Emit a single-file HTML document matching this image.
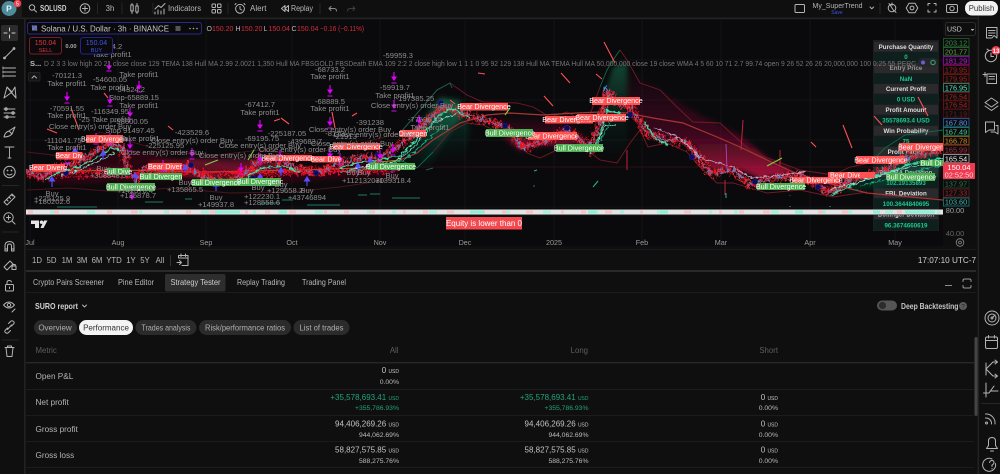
<!DOCTYPE html>
<html lang="en"><head><meta charset="utf-8"><title>SOLUSD</title>
<style>
html,body{margin:0;padding:0;width:1000px;height:474px;overflow:hidden;background:#0f0f0f}
svg{display:block;font-family:"Liberation Sans",sans-serif}
.i{fill:none;stroke:#b4b4b4;stroke-width:1;stroke-linecap:round;stroke-linejoin:round}
.g text{fill:#8c8c8c;font-size:7.6px;text-anchor:middle}
.bear rect{fill:#ff5252}.bull rect{fill:#4caf50}
.l text{fill:#fff;font-size:7.2px;text-anchor:middle}
.h{fill:#2a2a2c}.v{fill:#0e1f1d}
.ht{fill:#ddd;font-size:6.2px;font-weight:bold;text-anchor:middle}
.vt{fill:#1fc58f;font-size:6.2px;font-weight:bold;text-anchor:middle}
.pl{fill:#0c0c0c;stroke-width:.8}
.pt{font-size:7.3px;text-anchor:middle}
.tab{fill:#b8b8b8;font-size:8.2px}
.pill{fill:#2b2b2b}
.pt2{fill:#b0b0b0;font-size:8px;text-anchor:middle}
.met{fill:#b4b4b4;font-size:8.2px}
.val{fill:#c4c4c4;font-size:8px;text-anchor:end}
.pct{fill:#bcbcbc;font-size:6.8px;text-anchor:end}
.grn{fill:#22a27c}
.ax{fill:#9a9a9a;font-size:7.2px;text-anchor:middle}
.rng{fill:#b8b8b8;font-size:7.8px;text-anchor:middle}
</style></head><body>
<svg width="1000" height="474" viewBox="0 0 1000 474" xmlns="http://www.w3.org/2000/svg">
<defs>
<path id="p" fill="none" d="M27 172L43 177 57 167 77 162 93 153 110 143 123 148 128 173 137 180 147 167 167 170 187 167 203 177 227 182 243 175 260 160 280 160 300 170 320 172 340 163 360 158 380 157 400 145 420 128 443 107 467 115 490 122 507 128 523 147 543 142 567 130 590 148 600 123 607 90 617 103 630 107 647 133 667 140 687 142 710 173 733 170 750 185 773 178 800 175 830 193 850 180 870 175 885 170 900 160 920 155 943 150"/>
<linearGradient id="rf" x1="0" y1="0" x2="0" y2="1"><stop offset="0" stop-color="#a01040" stop-opacity=".02"/><stop offset=".6" stop-color="#b01044" stop-opacity=".3"/><stop offset="1" stop-color="#f01050" stop-opacity=".7"/></linearGradient>
<linearGradient id="gf" x1="0" y1="0" x2="0" y2="1"><stop offset="0" stop-color="#18a070" stop-opacity=".4"/><stop offset="1" stop-color="#0a4030" stop-opacity="0"/></linearGradient>
<linearGradient id="gf2" x1="0" y1="1" x2="1" y2="0"><stop offset="0" stop-color="#107050" stop-opacity="0"/><stop offset="1" stop-color="#14a070" stop-opacity=".45"/></linearGradient>
<clipPath id="c"><rect x="26" y="20" width="917" height="189"/></clipPath>
<filter id="j" x="-2%" y="-25%" width="104%" height="150%"><feTurbulence type="fractalNoise" baseFrequency=".38 .22" numOctaves="2" seed="3" result="n"/><feDisplacementMap in="SourceGraphic" in2="n" scale="11" xChannelSelector="R" yChannelSelector="G"/></filter>
<filter id="j2" x="-2%" y="-25%" width="104%" height="150%"><feTurbulence type="fractalNoise" baseFrequency=".22 .3" numOctaves="2" seed="8" result="n"/><feDisplacementMap in="SourceGraphic" in2="n" scale="5" xChannelSelector="R" yChannelSelector="G"/></filter>
<filter id="b" x="-20%" y="-20%" width="140%" height="140%"><feGaussianBlur stdDeviation="2.500"/></filter>
</defs>

<!-- page background + chart -->
<rect width="1000" height="474" fill="#0f0f0f"/>
<rect x="26" y="20" width="917" height="226" fill="#0a0a0c"/>
<rect x="26" y="246" width="950" height="24" fill="#0f0f0f"/>
<rect x="943" y="20" width="33" height="226" fill="#0e0e0e"/>
<rect x="0" y="17.500" width="978" height="1.600" fill="#222"/>
<rect x="24" y="18" width="1.600" height="456" fill="#222"/>
<rect x="26" y="270" width="950" height="2" fill="#2a2a2a"/>
<rect x="26" y="249" width="950" height="1" fill="#1a1a1a"/>
<rect x="977.500" y="0" width="1.600" height="474" fill="#222"/>

<!-- grid -->
<g stroke="#17171a" stroke-width=".8">
<path d="M30 20V246M118 20V246M206 20V246M292 20V246M380 20V246M465 20V246M554 20V246M642 20V246M721 20V246M810 20V246M895 20V246"/>
<path d="M26 60H943M26 100H943M26 140H943M26 207H943"/>
</g>
<path d="M400 167H943" stroke="#3a1118" stroke-width=".8"/>

<!-- on-chart table -->
<g>
<rect x="873" y="40" width="66" height="191" fill="#1a1e1e"/>
<rect class="h" x="874" y="42" width="64" height="9.500"/><rect class="v" x="874" y="52" width="64" height="11"/>
<rect class="h" x="874" y="63" width="64" height="10"/><rect class="v" x="874" y="74" width="64" height="9.500"/>
<rect class="h" x="874" y="84" width="64" height="9.500"/><rect class="v" x="874" y="94.500" width="64" height="9.500"/>
<rect class="h" x="874" y="105" width="64" height="9.500"/><rect class="v" x="874" y="115" width="64" height="10"/>
<rect class="h" x="874" y="126" width="64" height="9.500"/><rect class="v" x="874" y="136.500" width="64" height="9.500"/>
<rect class="h" x="874" y="147" width="64" height="9.500"/><rect class="v" x="874" y="157" width="64" height="9.500"/>
<rect class="h" x="874" y="167" width="64" height="10"/><rect class="v" x="874" y="178" width="64" height="9.500"/>
<rect class="h" x="874" y="188.500" width="64" height="9.500"/><rect class="v" x="874" y="199" width="64" height="9.500"/>
<rect class="h" x="874" y="209.500" width="64" height="9.500"/><rect class="v" x="874" y="220" width="64" height="10"/>
<text class="ht" x="906" y="49">Purchase Quantity</text><text class="vt" x="906" y="59">0</text>
<text class="ht" x="906" y="70" fill-opacity=".6">Entry Price</text><text class="vt" x="906" y="81">NaN</text>
<text class="ht" x="906" y="91">Current Profit</text><text class="vt" x="906" y="101.500">0 USD</text>
<text class="ht" x="906" y="112">Profit Amount</text><text class="vt" x="906" y="122.500">35578693.4 USD</text>
<text class="ht" x="906" y="133">Win Probability</text><text class="vt" x="906" y="143.500">75</text>
<text class="ht" x="906" y="154">Profit Factor</text><text class="vt" x="906" y="164">1.6</text>
<text class="ht" x="906" y="174.500">PNL MA Deviation</text><text class="vt" x="906" y="185">102.19135893</text>
<text class="ht" x="906" y="195.500">FBL Deviation</text><text class="vt" x="906" y="206">100.3644840695</text>
<text class="ht" x="906" y="216.500">Bollinger Deviation</text><text class="vt" x="906" y="227.500">96.3674660619</text>
</g>

<g clip-path="url(#c)">
<!-- shaded zones -->
<g filter="url(#b)">
<path d="M400 165L415 130 440 97 460 100 470 130 465 165 420 165Z" fill="url(#gf)"/>
<path d="M400 165L420 125 443 100 467 108 452 130 430 165Z" fill="url(#gf2)"/>
<path d="M483 116L520 115 560 118 588 140 565 146 540 145 520 150 500 135Z" fill="url(#rf)"/>
<path d="M600 160V110L613 67 627 63V160Z" fill="url(#gf)"/>
<path d="M627 70L660 90 700 115 740 135 770 160 795 172 760 178 735 168 712 170 690 142 665 138 645 132 630 108Z" fill="url(#rf)"/>
<path d="M800 170L840 172 870 170 850 182 832 192 815 182Z" fill="url(#rf)" opacity=".7"/>
<path d="M850 182L880 170 905 152 940 145 940 175 880 188 845 193Z" fill="#0e6a50" opacity=".25"/>
<path d="M27 178L90 158 125 147 200 165 270 165 340 165 390 155 400 175 330 180 240 186 180 180 120 183 60 185Z" fill="#500814" opacity=".45"/>
<path d="M40 170H130M185 160L235 168 290 170" stroke="#a01050" stroke-width="5" opacity=".35" fill="none"/>
<path d="M148 160L250 158 290 165 240 180 160 176Z" fill="#a0103a" opacity=".45"/>
</g>

<!-- bands -->
<g fill="none" stroke-width=".9">
<path stroke="#731a24" d="M400 133L420 110 437 90 450 83 467 95 483 102 517 103 533 107 550 117 567 112 587 123 600 87"/>
<path stroke="#0f6a4a" d="M400 133L420 110 437 90 450 83 452 88M600 87L607 70 613 60 620 50"/>
<path stroke="#731a24" d="M620 50L627 60 640 83 660 90 677 107 693 122 720 123 733 135 753 153 773 160 800 170 833 175 850 167 870 163"/>
<path stroke="#0f6a4a" d="M870 163L885 148 905 135 943 130"/>
<path stroke="#0f6a4a" d="M400 160L417 168 433 152"/>
<path stroke="#731a24" d="M433 152L450 132 467 123 483 125 500 133 517 140 527 153 540 158 557 150 587 150 600 160 617 163 630 143 640 130 648 147 667 143 687 152 700 167 717 183 733 183 750 188 767 193 800 190 833 197 867 192"/>
<path stroke="#4d141c" d="M27 152L60 156 100 132 125 140 160 150 210 156 260 150 300 155 350 146 400 133M27 190L70 188 120 192 170 188 230 193 290 192 340 187 400 178"/>
</g>
<path d="M400 160L417 153 433 140 460 123 487 115 510 113 543 115 577 113 600 112 627 113 653 118 683 123 717 137 740 147 767 160 793 172 827 183 867 193 943 200" fill="none" stroke="#a83434" stroke-width="1.200"/>
<path d="M27 172L120 170 200 172 300 170 360 168 400 166" fill="none" stroke="#b25a2a" stroke-width="1"/>
<path d="M370 163L400 160" fill="none" stroke="#a88a2a" stroke-width="1"/>

<!-- price ribbon: red body, candle hatching, teal ribbon -->
<g filter="url(#j)">
<use href="#p" stroke="#ff1a1a" stroke-width="2.400" opacity=".8"/>
<use href="#p" stroke="#ff1c28" stroke-width="8" stroke-dasharray="1.100 1.500"/>
<path d="M27 170L100 172 160 174 240 172 320 172 400 168" fill="none" stroke="#f01020" stroke-width="2"/>
<path d="M27 176L100 177 190 170 270 176 340 172 395 172" fill="none" stroke="#e51030" stroke-width="1.200"/>
<use href="#p" stroke="#3f98ea" stroke-width="4" stroke-dasharray=".9 4.200"/>
<use href="#p" stroke="#3f90e0" stroke-width=".8" stroke-dasharray="6 5"/>
</g>
<g fill="none" stroke-linejoin="round" filter="url(#j2)">
<path stroke="#3fdca6" stroke-width="1.300" d="M45 180L60 172 80 166 96 158 112 148 122 150M245 178L262 168 282 166 300 172M340 168L360 162 380 160 400 156 418 138 440 115 452 108 470 118M590 155L600 135 607 110 615 112 625 115M645 122L655 138 668 145M830 195L850 186 870 178 890 172 910 164 943 158"/>
<path stroke="#8bf0d0" stroke-width=".9" d="M60 176L80 170 96 162 114 153M350 170L370 165 395 162 415 146 435 122 455 114M595 150L605 125 615 125 M830 190L855 183 880 176 905 168 943 160"/>
<path stroke="#1fb584" stroke-width=".9" d="M340 172L380 168 405 160 425 142 445 125M600 142L612 118M860 186L890 178 920 170 943 165"/>
<path stroke="#c9a9c9" stroke-width=".9" d="M655 128L680 138 700 158 730 166 752 178 775 176 805 172"/>
</g>
<path d="M743 120L741 150M627 150V170M725 180V195M780 150V165" stroke="#c02040" stroke-width="1"/>
<path d="M726 144L727 170" stroke="#b040c0" stroke-width=".9"/>

<!-- red/green short diagonals -->
<g stroke="#ff5252" stroke-width="1.100" fill="none">
<path d="M478 73L485 74M561 73L570 83M544 96L553 106M596 74L602 79M843 125L852 148M811 142L816 147M604 42L615 63M918 97L928 116M874 116L882 125M104 93L108 98M71 108L79 130M274 121L280 119M281 118L289 124M332 112L335 128M352 116L357 113M168 126L173 130M47 129L57 133M450 100L455 104"/>
</g>
<path d="M767 166L782 158M205 165L218 160M248 160L254 150M505 115L510 108" stroke="#7ed040" stroke-width="1.100"/>

<!-- teal dashes -->
<g stroke="#1f7a6a" stroke-width=".9" fill="none">
<path d="M57 207H97M145 202H163M185 199H192M260 205L262 203H280M282 200H293M307 205H340M358 195H367M370 194H380M392 198H420M426 170L433 168M595 185L598 181M533 186H535M726 194V197M790 195V196M855 190H858"/>
</g>
<path d="M534 171L537 170M593 187L598 181M726 193V198M790 206V207M830 206V207" stroke="#20b090" stroke-width="1"/>

<!-- navy dots -->
<g fill="#0c0c60" stroke="#20208c" stroke-width=".6">
<circle cx="66" cy="173" r="2.600"/><circle cx="128" cy="173" r="2.600"/><circle cx="191" cy="165" r="2.600"/><circle cx="253" cy="178" r="2.600"/><circle cx="316" cy="173" r="2.600"/><circle cx="378" cy="155" r="2.600"/><circle cx="441" cy="103" r="2.600"/><circle cx="505" cy="126" r="2.600"/><circle cx="567" cy="128" r="2.600"/><circle cx="630" cy="115" r="2.600"/><circle cx="692" cy="157" r="2.600"/><circle cx="755" cy="182" r="2.600"/><circle cx="818" cy="187" r="2.600"/>
</g>

<!-- buy arrows -->
<g fill="#5a4cff" stroke="#5a4cff" stroke-width="1.100">
<path d="M52 179V187M49.500 181L52 177 54.500 181Z"/><path d="M103 153V160M100.500 155L103 151 105.500 155Z"/><path d="M135 175V184M132.500 177L135 173 137.500 177Z"/><path d="M185 167V172M182.500 169L185 165 187.500 169Z"/><path d="M216 184V191M213.500 186L216 182 218.500 186Z"/><path d="M260 176V183M257.500 178L260 174 262.500 178Z"/><path d="M281 170V176M278.500 172L281 168 283.500 172Z"/><path d="M307 179V186M304.500 181L307 177 309.500 181Z"/><path d="M358 165V172M355.500 167L358 163 360.500 167Z"/><path d="M370 160V166M367.500 162L370 158 372.500 162Z"/><path d="M392 166V173M389.500 168L392 164 394.500 168Z"/><path d="M75 150V156M72.500 152L75 148 77.500 152Z"/>
</g>

<!-- take-profit markers -->
<g fill="#e000ff" stroke="#e000ff" stroke-width="1.100">
<path d="M109 61V68M107 66L109 69 111 66ZM106.500 71H111.500"/>
<path d="M139 81V88M137 86L139 89 141 86ZM136.500 92H141.500"/>
<path d="M67 92V99M65 97L67 100 69 97ZM64.500 103H69.500"/>
<path d="M110 95V102M108 100L110 103 112 100ZM107.500 106H112.500"/>
<path d="M130 108V115M128 113L130 116 132 113ZM127.500 119H132.500"/>
<path d="M260 120V127M258 125L260 128 262 125ZM257.500 131H262.500"/>
<path d="M330 85V92M328 90L330 93 332 90ZM327.500 96H332.500"/>
<path d="M330 117V124M328 122L330 125 332 122ZM327.500 128H332.500"/>
<path d="M394 72V79M392 77L394 80 396 77ZM391.500 83H396.500"/>
<path d="M394 100V107M392 105L394 108 396 105ZM391.500 111H396.500"/>
<path d="M67 152V159M65 157L67 160 69 157ZM64.500 163H69.500"/>
<path d="M96 133V140M94 138L96 141 98 138ZM93.500 144H98.500"/>
<path d="M110 133V140M108 138L110 141 112 138ZM107.500 144H112.500"/>
<path d="M130 140V147M128 145L130 148 132 145ZM127.500 151H132.500"/>
<path d="M163 160V167M161 165L163 168 165 165ZM160.500 171H165.500"/>
<path d="M192 148V155M190 153L192 156 194 153ZM189.500 159H194.500"/>
<path d="M241 163V170M239 168L241 171 243 168ZM238.500 174H243.500"/>
<path d="M260 153V160M258 158L260 161 262 158ZM257.500 164H262.500"/>
<path d="M280 150V157M278 155L280 158 282 155ZM277.500 161H282.500"/>
<path d="M330 149V156M328 154L330 157 332 154ZM327.500 160H332.500"/>
<path d="M340 153V160M338 158L340 161 342 158ZM337.500 164H342.500"/>
<path d="M380 150V157M378 155L380 158 382 155ZM377.500 161H382.500"/>
<path d="M419 115V122M417 120L419 123 421 120ZM416.500 126H421.500"/>
<path d="M393 144V151M391 149L393 152 395 149ZM390.500 155H395.500"/>
<path d="M132 190V198M130 196L132 199 134 196Z"/>
</g>
</g>

<!-- Bear / Bull labels -->
<g class="l">
<g class="bear">
<rect x="32" y="164" width="33" height="7.500"/><text x="48" y="170">Bear Diverg</text>
<rect x="56" y="152" width="26" height="7.500"/><text x="69" y="158">Bear Div</text>
<rect x="86" y="135" width="37" height="8"/><text x="104" y="141.500">Bear Divergen</text>
<rect x="148" y="163" width="34" height="7"/><text x="165" y="169">Bear Diver</text>
<rect x="265" y="155" width="47" height="6"/><text x="288" y="160.500">Bear Divergence</text>
<rect x="312" y="156" width="28" height="6.500"/><text x="326" y="161.500">Bear Dive</text>
<rect x="333" y="143" width="47" height="7"/><text x="356" y="149">Bear Divergence</text>
<rect x="400" y="130" width="26" height="7"/><text x="413" y="136">Divergen</text>
<rect x="460" y="103" width="48" height="7.500"/><text x="484" y="109">Bear Divergence</text>
<rect x="545" y="116" width="48" height="7.500"/><text x="569" y="122">Bear Divergence</text>
<rect x="577" y="114" width="49" height="7.500"/><text x="602" y="120">Bear Divergence</text>
<rect x="528" y="132" width="49" height="8"/><text x="552" y="138.500">Bear Divergence</text>
<rect x="592" y="97" width="48" height="8"/><text x="616" y="103">Bear Divergence</text>
<rect x="792" y="177" width="48" height="6.500"/><text x="816" y="182.500">Bear Divergence</text>
<rect x="828" y="172" width="42" height="6.500"/><text x="849" y="177.500">Bear Diverg</text>
<rect x="856" y="156" width="49" height="8"/><text x="881" y="162.500">Bear Divergence</text>
<rect x="899" y="143" width="44" height="8"/><text x="921" y="149.500">Bear Divergen</text>
<rect x="860" y="172" width="15" height="6"/>
</g>
<g class="bull">
<rect x="107" y="183" width="48" height="8"/><text x="131" y="189.500">Bull Divergence</text>
<rect x="140" y="173" width="42" height="7"/><text x="161" y="179">Bull Divergen</text>
<rect x="107" y="168" width="23" height="7"/><text x="118" y="174">Bull Dive</text>
<rect x="192" y="179" width="48" height="7"/><text x="216" y="185">Bull Divergence</text>
<rect x="240" y="178" width="41" height="8"/><text x="260" y="184">Bull Divergenc</text>
<rect x="368" y="163" width="47" height="7"/><text x="391" y="169">Bull Divergence</text>
<rect x="486" y="129" width="47" height="8"/><text x="510" y="135.500">Bull Divergence</text>
<rect x="556" y="144" width="47" height="8"/><text x="579" y="150.500">Bull Divergence</text>
<rect x="757" y="183" width="48" height="7"/><text x="781" y="189">Bull Divergence</text>
<rect x="887" y="173" width="48" height="8"/><text x="911" y="179.500">Bull Divergence</text>
<rect x="920" y="160" width="23" height="6"/><text x="931" y="165.500">Bull Di</text>
</g>
</g>

<!-- gray order labels -->
<g class="g">
<text x="117" y="49">4.2</text><text x="112" y="57">Take profit1</text>
<text x="67" y="78">-70121.3</text><text x="67" y="86">Take profit1</text>
<text x="110" y="82">-54600.05</text><text x="110" y="90">Take profit1</text>
<text x="139" y="77">Take profit1</text><text x="130" y="92">-54324.2</text><text x="134" y="100">Stop-65889.15</text><text x="139" y="108">Take profit1</text>
<text x="67" y="111">-70591.55</text><text x="67" y="118">Take profit1</text>
<text x="110" y="114">-116349.95</text><text x="105" y="122">-25 Take profit1</text><text x="131" y="124">-58600.05</text>
<text x="90" y="129">Close entry(s) order Buy</text><text x="130" y="133">Stop 91497.45</text><text x="140" y="141">Take profit1</text>
<text x="63" y="143">-111041.75</text><text x="67" y="150">Take profit1</text>
<text x="192" y="135">-423529.6</text><text x="192" y="143">Close entry(s) order Buy</text>
<text x="165" y="148">-225125.95</text><text x="162" y="155">Close entry(s) order Buy</text>
<text x="240" y="158">Close entry(s) order Buy</text>
<text x="260" y="107">-67412.7</text><text x="260" y="115">Take profit1</text>
<text x="287" y="136">-225187.05</text><text x="262" y="141">-69195.75</text><text x="260" y="148">Close entry(s) order Buy</text>
<text x="305" y="144">-439683.7</text><text x="300" y="152">Close entry(s) order Buy</text>
<text x="330" y="72">-68733.2</text><text x="330" y="79">Take profit1</text>
<text x="330" y="104">-68889.5</text><text x="330" y="111">Take profit1</text>
<text x="335" y="136">-8173</text><text x="345" y="139">-21913</text><text x="350" y="132">Close entry(s) order Buy</text><text x="352" y="146">Close entry(s) order Buy</text>
<text x="370" y="125">-391238</text><text x="398" y="58">-59959.3</text><text x="395" y="90">-59919.7</text><text x="395" y="98">Take profit1</text><text x="412" y="108">Close entry(s) order Buy</text>
<text x="415" y="101">-197385.25</text><text x="425" y="122">-77506.35</text><text x="430" y="130">Take profit1</text>
<text x="375" y="137">Close entry(s) order Buy</text>
<text x="52" y="196">Buy</text><text x="52" y="204">+180202.6</text><text x="52" y="201">+225125.9</text>
<text x="103" y="171">Buy</text><text x="108" y="178">+308848.5</text>
<text x="185" y="185">Buy</text><text x="185" y="192">+135865.5</text>
<text x="216" y="200">Buy</text><text x="216" y="207">+149937.8</text>
<text x="138" y="198">+135878.7</text><text x="135" y="193">+142376.4</text>
<text x="281" y="187">Buy</text><text x="285" y="193">+129658.2</text><text x="262" y="199">+122230.1</text><text x="262" y="205">+128558.6</text><text x="258" y="190">Buy</text>
<text x="307" y="193">Buy</text><text x="307" y="200">+43746894</text>
<text x="353" y="175">Buy</text><text x="364" y="175">Buy</text><text x="363" y="183">+112132030</text><text x="393" y="183">+139318.4</text><text x="392" y="178">Buy</text>
</g>

<!-- legend -->
<rect x="27.500" y="22.500" width="174" height="11.500" rx="2" fill="#0a0a0c" stroke="#2a2a86" stroke-width="1"/>
<rect x="32" y="25.500" width="5" height="5" fill="#4f8f9f"/><path d="M32 25.500L37 30.500" stroke="#8e50c0" stroke-width="1.600"/>
<text x="41" y="31.500" fill="#c8c8c8" font-size="8.600" textLength="128" lengthAdjust="spacingAndGlyphs">Solana / U.S. Dollar · 3h · BINANCE</text>
<rect x="175.500" y="26" width="5" height="5" fill="#555"/>
<circle cx="190" cy="28.500" r=".8" fill="#aaa"/><circle cx="193.500" cy="28.500" r=".8" fill="#aaa"/><circle cx="197" cy="28.500" r=".8" fill="#aaa"/>
<g font-size="7">
<text x="206.500" y="31" fill="#bbb">O</text><text x="212" y="31" fill="#d32f3a">150.20</text>
<text x="235.500" y="31" fill="#bbb">H</text><text x="241" y="31" fill="#d32f3a">150.20</text>
<text x="263.500" y="31" fill="#bbb">L</text><text x="268.500" y="31" fill="#d32f3a">150.04</text>
<text x="291.500" y="31" fill="#bbb">C</text><text x="297" y="31" fill="#d32f3a">150.04</text>
<text x="320" y="31" fill="#d32f3a" textLength="44" lengthAdjust="spacingAndGlyphs">−0.16 (−0.11%)</text>
</g>
<rect x="29.500" y="37.500" width="32" height="16.500" rx="2.500" fill="#0a0a0c" stroke="#7a1f26"/>
<text x="45.500" y="45" fill="#e0343e" font-size="7" text-anchor="middle">150.04</text><text x="45.500" y="52" fill="#e0343e" font-size="5.600" text-anchor="middle">SELL</text>
<text x="71" y="48" fill="#aaa" font-size="5.800" font-weight="bold" text-anchor="middle">0.00</text>
<rect x="80.500" y="37.500" width="32" height="16.500" rx="2.500" fill="#0a0a0c" stroke="#23238a"/>
<text x="96.500" y="45" fill="#3f55e8" font-size="7" text-anchor="middle">150.04</text><text x="96.500" y="52" fill="#3f55e8" font-size="5.600" text-anchor="middle">BUY</text>
<text x="30" y="66" fill="#c0c0c0" font-size="7.500" font-weight="bold">S...</text>
<text x="44" y="66" fill="#757575" font-size="7.600" textLength="872" lengthAdjust="spacingAndGlyphs">D 2 3 3 low high 20 21 close close 129 TEMA 138 Hull MA 2.99 2.0021 1,350 Hull MA FBSGOLD FBSDeath EMA 109 2:2 2 close high low 1 1 1 0 95 92 129 138 Hull MA TEMA Hull MA 50,000,000 close 19 close WMA 4 5 60 10 71 2.7 99.74 open 9 26 52 26 26 20,000,000 100 0:25 55 PERC</text>
<rect x="918" y="58" width="20" height="9" rx="4" fill="#26262a"/><circle cx="923" cy="62.500" r="2" fill="#6a5fd0"/><circle cx="933" cy="62.500" r="2.200" fill="none" stroke="#2fb070" stroke-width="1"/>
<rect x="28.500" y="72.500" width="11.500" height="8.500" rx="1.500" fill="#141414" stroke="#222"/><path class="i" d="M32 78L34.200 75.800 36.500 78"/>

<!-- white strip -->
<rect x="26" y="209.500" width="917" height="5.200" fill="#e4e4e4"/>
<g stroke-width="3.200" fill="none">
<path stroke="#f6c4c6" stroke-dasharray="5 19 7 28 3 17" d="M28 212H942"/>
<path stroke="#a8f0da" stroke-dasharray="4 33 8 44 3 22" d="M50 212H942"/>
<path stroke="#8ff0d8" d="M215 212H240M280 212H287M470 212H484M588 212H596M660 212H668M795 212H803M873 212H880M905 212H935"/>
</g>
<rect x="26" y="214.500" width="917" height=".8" fill="#222"/>
<!-- TV logo -->
<path d="M31 220.500H39V228H35V224H31ZM40.500 228L44 220.500H47.500L43.500 228Z" fill="#e6e6e6"/><circle cx="41.500" cy="222.200" r="1.700" fill="#e6e6e6"/>
<!-- equity box -->
<rect x="446" y="217" width="76" height="12.500" fill="#f2484e"/>
<text x="484" y="226" fill="#fff" font-size="8" text-anchor="middle">Equity is lower than 0</text>

<!-- price axis -->
<rect x="945.500" y="22.500" width="30" height="13" rx="2" fill="#0e0e0e" stroke="#2a2a2a"/>
<text x="947" y="31.500" fill="#cfcfcf" font-size="7">USD</text><path d="M971 29L972.500 30.500 974 29" fill="#bbb" stroke="#bbb" stroke-width=".6"/>
<g>
<rect class="pl" x="943.500" y="38.500" width="25.500" height="8.300" stroke="#1f5f2f"/><text class="pt" x="956" y="45.300" fill="#3c8f4c">203.12</text>
<rect class="pl" x="943.500" y="47.500" width="25.500" height="8.300" stroke="#2d6a2f"/><text class="pt" x="956" y="54.300" fill="#5ba64a">201.77</text>
<rect class="pl" x="943.500" y="56.500" width="25.500" height="8.300" stroke="#a000c0"/><text class="pt" x="956" y="63.300" fill="#c71ce0">181.29</text>
<rect class="pl" x="943.500" y="65.500" width="25.500" height="8.300" stroke="#7a1515"/><text class="pt" x="956" y="72.300" fill="#a82020">179.95</text>
<rect class="pl" x="943.500" y="74.500" width="25.500" height="8.300" stroke="#7a1515"/><text class="pt" x="956" y="81.300" fill="#a82020">179.95</text>
<rect class="pl" x="943.500" y="83.500" width="25.500" height="8.300" stroke="#2a9a7a"/><text class="pt" x="956" y="90.300" fill="#62e8c0">176.95</text>
<rect class="pl" x="943.500" y="92.500" width="25.500" height="8.300" stroke="#7a1515"/><text class="pt" x="956" y="99.300" fill="#b02222">176.54</text>
<rect class="pl" x="943.500" y="100.800" width="25.500" height="8.300" stroke="#7a1515"/><text class="pt" x="956" y="107.600" fill="#b02222">176.54</text>
<rect class="pl" x="943.500" y="109.500" width="25.500" height="8.300" stroke="#4a1218"/><text class="pt" x="956" y="116.300" fill="#6a1b22">171.19</text>
<rect class="pl" x="943.500" y="118.500" width="25.500" height="8.300" stroke="#2a5ca8"/><text class="pt" x="956" y="125.300" fill="#5a9aff">167.80</text>
<rect class="pl" x="943.500" y="127.500" width="25.500" height="8.300" stroke="#1f8a5a"/><text class="pt" x="956" y="134.300" fill="#4cc898">167.49</text>
<rect class="pl" x="943.500" y="136.500" width="25.500" height="8.300" stroke="#a06010"/><text class="pt" x="956" y="143.300" fill="#d88a20">166.78</text>
<rect class="pl" x="943.500" y="145.500" width="25.500" height="8.300" stroke="#6a1c2a"/><text class="pt" x="956" y="152.300" fill="#b03040">165.99</text>
<rect class="pl" x="943.500" y="154.500" width="25.500" height="8.300" stroke="#aaa"/><text class="pt" x="956" y="161.300" fill="#eee">165.54</text>
<rect x="943" y="163" width="32" height="16" fill="#f0384e"/>
<text x="959" y="170" fill="#fff" font-size="7.600" text-anchor="middle">150.04</text><text x="959" y="177.500" fill="#ffd8dc" font-size="7.400" text-anchor="middle">02:52:50</text>
<rect class="pl" x="943.500" y="179.800" width="25.500" height="8" stroke="#123c28"/><text class="pt" x="956" y="186.500" fill="#2e7a50">137.97</text>
<rect class="pl" x="943.500" y="189" width="25.500" height="8" stroke="#6a1c22"/><text class="pt" x="956" y="195.700" fill="#a52a32">127.33</text>
<rect class="pl" x="943.500" y="198" width="25.500" height="8" stroke="#1f7a7a"/><text class="pt" x="956" y="204.700" fill="#3ab8b0">103.60</text>
<text x="955" y="213" fill="#a0a0a0" font-size="7.400" text-anchor="middle">80.00</text>
<text x="955" y="236" fill="#666" font-size="7.400" text-anchor="middle">40.00</text>
</g>
<g fill="none" stroke="#8a8a8a" stroke-width=".8"><circle cx="960" cy="242.500" r="3.800"/><circle cx="960" cy="242.500" r="1.400"/></g>

<!-- time axis -->
<g class="ax">
<text x="30" y="245">Jul</text><text x="118" y="245">Aug</text><text x="206" y="245">Sep</text><text x="292" y="245">Oct</text><text x="380" y="245">Nov</text><text x="465" y="245">Dec</text><text x="554" y="245">2025</text><text x="642" y="245">Feb</text><text x="721" y="245">Mar</text><text x="810" y="245">Apr</text><text x="895" y="245">May</text>
</g>

<!-- range bar -->
<g class="rng">
<text x="37" y="263">1D</text><text x="51.500" y="263">5D</text><text x="67" y="263">1M</text><text x="82" y="263">3M</text><text x="97" y="263">6M</text><text x="114" y="263">YTD</text><text x="131" y="263">1Y</text><text x="145" y="263">5Y</text><text x="160" y="263">All</text>
</g>
<path d="M170.500 255V266" stroke="#333"/>
<g class="i"><path d="M178.500 258V255.500H188V265.500H182M178.500 258H188M181 254V256.500M185.500 254V256.500M177 262.500H181.500M179.500 260.500L181.500 262.500 179.500 264.500"/></g>
<text x="947" y="263" fill="#d0d0d0" font-size="8.200" text-anchor="middle">17:07:10 UTC-7</text>

<!-- tabs -->
<rect x="165" y="274" width="60.500" height="17.500" rx="2" fill="#2e2e2e"/>
<text class="tab" x="33" y="285" textLength="71" lengthAdjust="spacingAndGlyphs">Crypto Pairs Screener</text>
<text class="tab" x="118" y="285" textLength="36" lengthAdjust="spacingAndGlyphs">Pine Editor</text>
<text class="tab" x="170.500" y="285" textLength="50" lengthAdjust="spacingAndGlyphs" style="fill:#cfcfcf">Strategy Tester</text>
<text class="tab" x="237" y="285" textLength="48" lengthAdjust="spacingAndGlyphs">Replay Trading</text>
<text class="tab" x="302" y="285" textLength="44" lengthAdjust="spacingAndGlyphs">Trading Panel</text>
<rect x="26" y="292" width="950" height=".9" fill="#1e1e1e"/>
<path d="M945 285.500H952" stroke="#8c8c8c"/>
<g class="i" style="stroke:#9a9a9a"><path d="M963 281.500V280.500Q963 279 964.500 279H969.500Q971 279 971 280.500V281.500M963 285.500V286.500Q963 288 964.500 288H969.500Q971 288 971 286.500V285.500"/></g>

<text x="35" y="309" fill="#d2d2d2" font-size="8.200" font-weight="bold" textLength="43" lengthAdjust="spacingAndGlyphs">SURO report</text>
<path class="i" d="M82.500 305L84.500 307 86.500 305"/>
<rect x="877" y="300.500" width="20" height="10" rx="5" fill="#555"/><circle cx="882.500" cy="305.500" r="3.600" fill="#2c2c2c"/>
<text x="901" y="309" fill="#c6c6c6" font-size="8" font-weight="bold" textLength="57.500" lengthAdjust="spacingAndGlyphs">Deep Backtesting</text>
<circle cx="963" cy="306" r="4" fill="#5a5a5a"/><text x="963" y="308.500" fill="#222" font-size="6.500" text-anchor="middle">?</text>

<!-- pills -->
<rect class="pill" x="34" y="320" width="43" height="15" rx="7.500"/><text class="pt2" x="55" y="330.500">Overview</text>
<rect x="79" y="320" width="54" height="15" rx="7.500" fill="#f4f4f4"/><text class="pt2" x="106" y="330.500" style="fill:#333">Performance</text>
<rect class="pill" x="135.500" y="320" width="61" height="15" rx="7.500"/><text class="pt2" x="166" y="330.500" textLength="49" lengthAdjust="spacingAndGlyphs">Trades analysis</text>
<rect class="pill" x="199" y="320" width="92" height="15" rx="7.500"/><text class="pt2" x="245" y="330.500" textLength="80" lengthAdjust="spacingAndGlyphs">Risk/performance ratios</text>
<rect class="pill" x="293.500" y="320" width="56" height="15" rx="7.500"/><text class="pt2" x="321.500" y="330.500" textLength="44" lengthAdjust="spacingAndGlyphs">List of trades</text>

<!-- table -->
<text x="35.500" y="353" fill="#5e5e5e" font-size="7.800">Metric</text>
<text x="398.500" y="353" fill="#5e5e5e" font-size="7.800" text-anchor="end">All</text>
<text x="588" y="353" fill="#5e5e5e" font-size="7.800" text-anchor="end">Long</text>
<text x="778" y="353" fill="#5e5e5e" font-size="7.800" text-anchor="end">Short</text>
<rect x="26" y="362" width="948" height="1.400" fill="#282828"/>
<rect x="26" y="389" width="948" height=".9" fill="#1f1f1f"/>
<rect x="26" y="415" width="948" height=".9" fill="#1f1f1f"/>
<rect x="26" y="441" width="948" height=".9" fill="#1f1f1f"/>
<rect x="26" y="467" width="948" height=".9" fill="#1f1f1f"/>
<text class="met" x="35.500" y="379">Open P&amp;L</text>
<text class="met" x="35.500" y="405">Net profit</text>
<text class="met" x="35.500" y="432">Gross profit</text>
<text class="met" x="35.500" y="458">Gross loss</text>

<text class="val" x="399" y="373">0 <tspan font-size="5">USD</tspan></text><text class="pct" x="399" y="384">0.00%</text>
<text class="val grn" x="399" y="400">+35,578,693.41 <tspan font-size="5">USD</tspan></text><text class="pct grn" x="399" y="410">+355,786.93%</text>
<text class="val" x="399" y="426.500">94,406,269.26 <tspan font-size="5">USD</tspan></text><text class="pct" x="399" y="437">944,062.69%</text>
<text class="val" x="399" y="452.500">58,827,575.85 <tspan font-size="5">USD</tspan></text><text class="pct" x="399" y="463">588,275.76%</text>

<text class="val grn" x="588.500" y="400">+35,578,693.41 <tspan font-size="5">USD</tspan></text><text class="pct grn" x="588.500" y="410">+355,786.93%</text>
<text class="val" x="588.500" y="426.500">94,406,269.26 <tspan font-size="5">USD</tspan></text><text class="pct" x="588.500" y="437">944,062.69%</text>
<text class="val" x="588.500" y="452.500">58,827,575.85 <tspan font-size="5">USD</tspan></text><text class="pct" x="588.500" y="463">588,275.76%</text>

<text class="val" x="778" y="400">0 <tspan font-size="5">USD</tspan></text><text class="pct" x="778" y="410">0.00%</text>
<text class="val" x="778" y="426.500">0 <tspan font-size="5">USD</tspan></text><text class="pct" x="778" y="437">0.00%</text>
<text class="val" x="778" y="452.500">0 <tspan font-size="5">USD</tspan></text><text class="pct" x="778" y="463">0.00%</text>
<rect x="974.500" y="337" width="3" height="79" rx="1.500" fill="#444"/>

<!-- top bar -->
<rect x="0" y="0" width="978" height="17.500" fill="#0f0f0f"/><rect x="979" width="21" height="17.500" fill="#0f0f0f"/>
<rect x="0" y="0" width="22" height="17" fill="#1c1c1c"/>
<circle cx="9" cy="8.500" r="7.500" fill="#4d8c9a"/><text x="9" y="11.500" fill="#eaf4f4" font-size="8.500" font-weight="bold" text-anchor="middle">P</text>
<circle cx="17.500" cy="3.500" r="3.800" fill="#ef4050"/><text x="17.500" y="5.600" fill="#fff" font-size="5.500" text-anchor="middle">5</text>
<g class="i"><circle cx="32" cy="7.500" r="2.700"/><path d="M34 9.500L36.500 12"/></g>
<text x="40" y="11" fill="#cfcfcf" font-size="8" font-weight="bold" textLength="26.500" lengthAdjust="spacingAndGlyphs">SOLUSD</text>
<g class="i"><circle cx="85" cy="8.500" r="4.800"/><path d="M85 6V11M82.500 8.500H87.500"/></g>
<path d="M97.500 3V14M122 3V14M153 3V14M228 3V14M320 3V14" stroke="#2a2a2a" stroke-width=".9"/>
<text x="110" y="11" fill="#b8b8b8" font-size="7.800" text-anchor="middle">3h</text>
<g class="i"><path d="M132 3.500V13.500M137 3.500V13.500"/><rect x="130.800" y="5" width="2.400" height="6" fill="#0f0f0f"/><rect x="135.800" y="6" width="2.400" height="6" fill="#0f0f0f"/></g>
<g class="i"><path d="M155 12V14M158 10V14M161 11V14M164 9V14M155 9L158.500 5.500 161 7.500 165 3.500"/></g>
<text x="168" y="11" fill="#b8b8b8" font-size="8" textLength="33" lengthAdjust="spacingAndGlyphs">Indicators</text>
<g class="i"><rect x="212" y="4" width="3.500" height="3.500" rx=".6"/><rect x="217.500" y="4" width="3.500" height="3.500" rx=".6"/><rect x="212" y="9.500" width="3.500" height="3.500" rx=".6"/><rect x="217.500" y="9.500" width="3.500" height="3.500" rx=".6"/></g>
<g class="i"><circle cx="240" cy="8.800" r="4.400"/><path d="M240 6.500V9L241.800 10M236 3.500L235 4.500M244 3.500L245 4.500"/></g>
<text x="250" y="11" fill="#b8b8b8" font-size="8" textLength="16.500" lengthAdjust="spacingAndGlyphs">Alert</text>
<g class="i"><path d="M285 5.500L281.500 8.500 285 11.500ZM288.500 5.500L285 8.500 288.500 11.500Z"/></g>
<text x="291" y="11" fill="#b8b8b8" font-size="8" textLength="22" lengthAdjust="spacingAndGlyphs">Replay</text>
<g class="i" style="stroke:#8a8a8a"><path d="M329 8.500H334Q336.500 8.500 336.500 11M331 6.500L329 8.500 331 10.500"/></g>
<g class="i" style="stroke:#3e3e3e"><path d="M355 8.500H350Q347.500 8.500 347.500 11M353 6.500L355 8.500 353 10.500"/></g>

<g class="i"><rect x="795" y="4.500" width="9.500" height="8" rx="1"/></g>
<text x="812.500" y="8" fill="#b4b4b4" font-size="7.200" textLength="50" lengthAdjust="spacingAndGlyphs">My_SuperTrend</text>
<text x="837" y="14" fill="#3c55f0" font-size="5" text-anchor="middle">Save</text>
<path class="i" d="M870 7L871.800 8.800 873.600 7"/>
<path d="M880 3V14" stroke="#2a2a2a"/>
<g class="i"><circle cx="892" cy="8" r="3.800"/><path d="M892 5.500V3M889 3.500L892 8 894 11M894.500 10.500L896 12.500"/></g>
<g class="i"><path d="M909 3.300H915L917.800 8 915 12.700H909L906.200 8Z"/><circle cx="912" cy="8" r="1.900"/></g>
<g class="i"><path d="M928 5.500V3.500H930M934 3.500H936V5.500M936 10V12H934M930 12H928V10"/></g>
<g class="i"><rect x="946.500" y="4.500" width="11" height="8" rx="1.500"/><circle cx="952" cy="8.500" r="2.200"/></g>
<rect x="965" y="1" width="33" height="14.500" rx="7" fill="#f2f2f2"/>
<text x="981.500" y="11" fill="#333" font-size="7.800" text-anchor="middle">Publish</text>

<!-- left toolbar -->
<rect x="1" y="25" width="17" height="16" rx="2" fill="#2c2c2c"/>
<g class="i">
<path d="M9.500 28V31M9.500 35V38M4 33H7M12 33H15" style="stroke:#d0d0d0"/>
<path d="M4.500 58L14 48.500"/><circle cx="4.500" cy="58" r=".9"/><circle cx="14" cy="48.500" r=".9"/>
<path d="M4 68H15.500M4 72H15.500M4 76H15.500M3 67V69M3 71V73M3 75V77"/>
<path d="M4 98L7 87 12 92 15 87 16 98M7 87L16 98M12 92L4 98"/>
<path d="M4 109H15M4 117H15M4 113H15"/><circle cx="6" cy="109" r="1.200"/><circle cx="13" cy="113" r="1.200"/><circle cx="7" cy="117" r="1.200"/>
<path d="M4 137Q5 132 9 131L15 127 12 134Q9 137 4 137ZM9 131L12 134"/>
<path d="M5 147H14M9.500 147V158M8 158H11" style="stroke-width:.9"/>
<circle cx="9.500" cy="172" r="5.700"/><circle cx="7.500" cy="170.500" r=".4"/><circle cx="11.500" cy="170.500" r=".4"/><path d="M7 174Q9.500 176 12 174"/>
<path d="M4 202L12 194 15 197 7 205Z"/><path d="M6.500 199.500L8 201M9 197L10.500 198.500M11.500 195L13 196"/>
<circle cx="8.500" cy="217.500" r="4.700"/><path d="M12 221L15 224M6.500 217.500H10.500M8.500 215.500V219.500"/>
<path d="M5 251V246Q5 241.500 9.500 241.500T14 246V251H11.500V246Q11.500 244 9.500 244T7.500 246V251ZM5 249H7.500M11.500 249H14"/>
<path d="M4 267L10 261 13 264 7 270ZM4 267L7 270"/><rect x="12" y="266" width="4" height="3.500"/><path d="M12.800 266V264.500H15.200V266"/>
<rect x="5.500" y="284.500" width="8" height="6.500" rx="1"/><path d="M7 284.500V282.500Q7 280.500 9.300 280.500 11 280.500 11.500 282"/><path d="M9.500 287V288.500"/>
<path d="M3.500 305Q9 299 14.500 305 9 311 3.500 305Z"/><circle cx="9" cy="305" r="1.700"/><path d="M12 312L15 309"/>
<path d="M7.500 328L5.500 330Q4 331.500 5.500 332.500 7 334 8.500 332.500L10.500 330.500M11.500 326L13.500 324Q15 322.500 13.500 321.500 12 320 10.500 321.500L8.500 323.500M7.500 329.500L11.500 325"/>
<path d="M5 347.500H14M7.500 347.500V346H11.500V347.500M6 347.500L7 356.500H12L13 347.500"/>
</g>
<path d="M2 185.500H19M2 232H19M2 340H19" stroke="#262626" stroke-width=".9"/>

<!-- right toolbar -->
<g class="i">
<path d="M986.500 27.500H997V38L994 35.500 992 38H986.500Z"/><path d="M988.500 30.500H995M988.500 33H995M988.500 35.500H992"/>
<circle cx="991" cy="56" r="5.700"/><path d="M991 53V56.500H993.500M987 49L989 50.500"/>
<path d="M987 74H996.500V83.500H987ZM989 76.500H994.500M989 79H994.500M983 74.500H987M985 72.500V76.500"/>
<path d="M991.500 98L998 102.500 991.500 107 985 102.500ZM985 106L991.500 110.500 998 106"/>
<path d="M985.500 122H994.500V130H989L985.500 132.500ZM996 125.500H998V134L995 132H991"/>
<circle cx="992" cy="318" r="7"/><circle cx="992" cy="318" r="4"/><circle cx="992" cy="318" r="1"/><path d="M992.500 317.500L995 315"/>
<rect x="985.500" y="337" width="12" height="11.500" rx="1.500"/><path d="M985.500 340.500H997.500M988.500 335.500V338M994.500 335.500V338"/>
<path d="M986 363V375M986 369L993 362H997M986 369L993 376H997M995 360L997.500 362 995 364M995 374L997.500 376 995 378"/>
<path d="M986 383V397M983.500 393H989L994 386M990 391H998"/>
<path d="M985.500 414A9 9 0 0 1 995 424M985.500 418A5.500 5.500 0 0 1 991.500 424"/><circle cx="986.500" cy="423" r="1"/>
<path d="M986.500 448.500H997.500L995.500 445.500V441Q995.500 437.500 992 437.500T988.500 441V445.500ZM990.500 451H993.500"/>
<path d="M995.500 463.500A6.500 6.500 0 1 1 992 459M989.500 462.500Q990 460.500 992 460.500T994 462.500Q994 464 992 465V466.500M992 468.500V469"/>
</g>
<path d="M981 403.500H1000" stroke="#262626"/>
<circle cx="996" cy="50.500" r="4.500" fill="#f04050"/><text x="996" y="53" fill="#fff" font-size="6.200" font-weight="bold" text-anchor="middle">13</text>
</svg>
</body></html>
